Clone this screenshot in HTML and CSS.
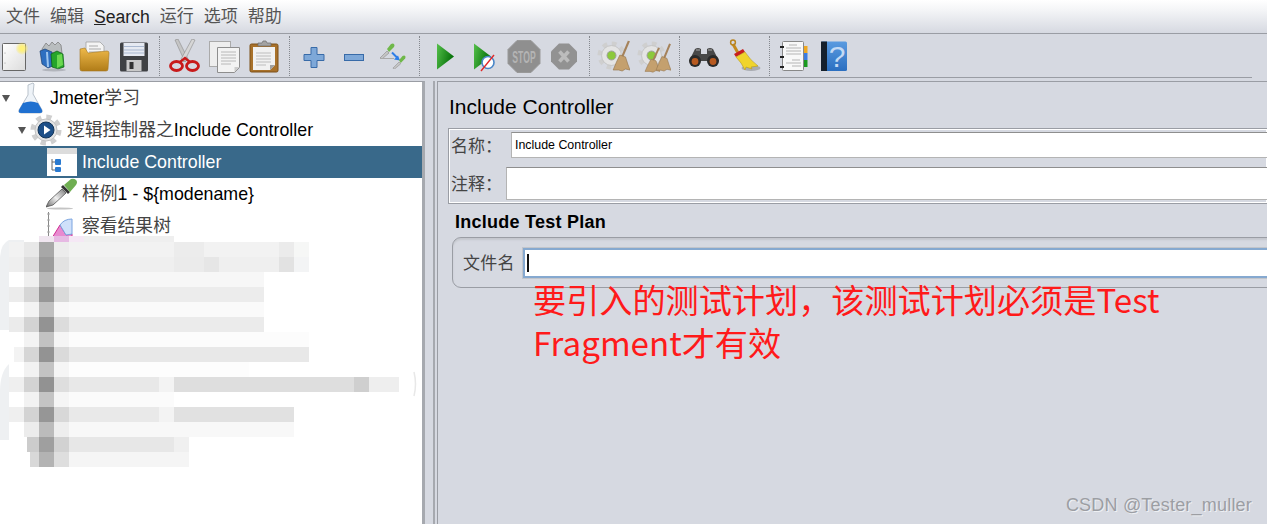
FILE: index.html
```html
<!DOCTYPE html>
<html lang="zh-CN">

<head>
    <meta charset="UTF-8">
    <title>Apache JMeter - Include Controller</title>
    <link rel="stylesheet" href="styles.css">
</head>

<body>
    <svg class="svg-defs" width="0" height="0">
        <defs>
            <linearGradient id="paper" x1="0" y1="0" x2="1" y2="1"><stop offset="0" stop-color="#fff"/><stop offset="1" stop-color="#dcdcdc"/></linearGradient>
            <linearGradient id="gold" x1="0" y1="0" x2="0" y2="1"><stop offset="0" stop-color="#eeb94a"/><stop offset="1" stop-color="#b07c18"/></linearGradient>
            <linearGradient id="green" x1="0" y1="0" x2="1" y2="0.4"><stop offset="0" stop-color="#55c04a"/><stop offset="1" stop-color="#046f08"/></linearGradient>
            <linearGradient id="blue" x1="0" y1="0" x2="0" y2="1"><stop offset="0" stop-color="#5a9be0"/><stop offset="1" stop-color="#2b6fc0"/></linearGradient>
            <linearGradient id="steel" x1="0" y1="1" x2="1" y2="0"><stop offset="0" stop-color="#6a6a6a"/><stop offset="0.5" stop-color="#f0f0f0"/><stop offset="1" stop-color="#777"/></linearGradient>
            <radialGradient id="glow"><stop offset="0.3" stop-color="#fff27a"/><stop offset="1" stop-color="#ffe94a" stop-opacity="0"/></radialGradient>
            <symbol id="gear" viewBox="0 0 32 32">
                <circle cx="16" cy="16" r="12.500" fill="none" stroke="#cfcfcf" stroke-width="6" stroke-dasharray="5 4.800"/>
                <circle cx="16" cy="16" r="11" fill="#e4e4e4" stroke="#c2c2c2"/>
            </symbol>
            <symbol id="twig" viewBox="0 0 16 32" preserveAspectRatio="none">
                <path d="M15 1L9 17" stroke="#a5825a" stroke-width="2"/>
                <path d="M7 15l5 2 2 7 2 6-4-1-3 2-3-1-5 0 3-8z" fill="#c4a06e" stroke="#94744c" stroke-width="0.6"/>
            </symbol>
            <symbol id="dropper" viewBox="0 0 16 16">
                <path d="M1 15l7-7 2 2-7 6z" fill="#c4c4c4" stroke="#8c8c8c" stroke-width="0.6"/>
                <path d="M8 6l4-5q2-1 3 0t0 3l-5 5z" fill="#6fb84a"/>
            </symbol>
        </defs>
    </svg>

    <nav class="menubar">
        <span class="menu-item">文件</span>
        <span class="menu-item">编辑</span>
        <span class="menu-item menu-latin"><u>S</u>earch</span>
        <span class="menu-item">运行</span>
        <span class="menu-item">选项</span>
        <span class="menu-item">帮助</span>
    </nav>

    <div class="toolbar">
        <!-- new -->
        <svg class="tool tool-first" viewBox="0 0 34 34">
            <rect x="5.500" y="4.500" width="23" height="27" rx="1" fill="url(#paper)" stroke="#666"/>
            <circle cx="8" cy="14" r="0.6" fill="#999"/><circle cx="8" cy="24" r="0.6" fill="#999"/>
            <circle cx="25" cy="9.500" r="6.500" fill="url(#glow)"/>
        </svg>
        <!-- templates -->
        <svg class="tool" viewBox="0 0 34 34">
            <path d="M5 10l4-6 3 3 3-4 3 3 3-3 3 3 1 8H6z" fill="#b9bdbf" stroke="#777" stroke-width="0.7"/>
            <path d="M3 12l5-2 7 3 1 14-5 2-6-4z" fill="#2e6fc0" stroke="#1c3f70" stroke-width="0.7"/>
            <path d="M9 13l2 0 1 15-2 0z" fill="#9fc6ee"/>
            <path d="M14 15l6-3 6 3 1 13-6 2-6-2z" fill="#25a52a" stroke="#0e5a12" stroke-width="0.7"/>
            <path d="M20 16l5-1 1 11-6 3z" fill="#6bd850"/>
            <ellipse cx="17" cy="31" rx="12" ry="1.400" fill="#9a9da3" opacity="0.6"/>
        </svg>
        <!-- open -->
        <svg class="tool" viewBox="0 0 34 34">
            <path d="M9 3h14l4 4v12H9z" fill="#f4f4f4" stroke="#999" stroke-width="0.7"/>
            <path d="M12 7h9M12 10h12M12 13h12" stroke="#aaa"/>
            <path d="M3 10l5-1 3 5 19-2q2 0 2 2l-1 16q0 2-2 2H5q-2 0-2-2z" fill="url(#gold)" stroke="#a5771f" stroke-width="0.6"/>
        </svg>
        <!-- save -->
        <svg class="tool" viewBox="0 0 34 34">
            <rect x="3" y="3.500" width="28" height="29" rx="1.500" fill="#3f4144"/>
            <rect x="6.500" y="4" width="21" height="13" fill="#e6eaf2"/>
            <path d="M7 7.500h20M7 11h20M7 14h20" stroke="#a9b8d0"/>
            <rect x="9.500" y="21" width="15" height="11" fill="#c9c9c9"/>
            <rect x="12.500" y="23" width="4" height="7" fill="#333"/>
        </svg>
        <span class="sep"></span>
        <!-- cut -->
        <svg class="tool" viewBox="0 0 34 34">
            <path d="M8 1l3-1 10 20-3 3z" fill="#c5c5c5" stroke="#8c8c8c" stroke-width="0.6"/>
            <path d="M28 1l-3-1-11 20 3 3z" fill="#d6d6d6" stroke="#8c8c8c" stroke-width="0.6"/>
            <ellipse cx="9.500" cy="27" rx="6" ry="4.500" fill="none" stroke="#c81a1a" stroke-width="2.800"/>
            <ellipse cx="25.500" cy="27" rx="6" ry="4.500" fill="none" stroke="#c81a1a" stroke-width="2.800"/>
            <path d="M13 23l5-4 5 4" fill="none" stroke="#c81a1a" stroke-width="2.400"/>
        </svg>
        <!-- copy -->
        <svg class="tool" viewBox="0 0 34 34">
            <rect x="2.500" y="2.500" width="21" height="25" fill="#eee" stroke="#aaa"/>
            <path d="M10.500 8.500h22v20l-5 5h-17z" fill="#f3f3f3" stroke="#8e8e8e"/>
            <path d="M27.500 33l0-5h5z" fill="#ccc"/>
            <path d="M14 13h15M14 16h15M14 19h15M14 22h15M14 25h10" stroke="#b8b8b8"/>
        </svg>
        <!-- paste -->
        <svg class="tool" viewBox="0 0 34 34">
            <rect x="3" y="5" width="28" height="28" rx="1.500" fill="#a8712a" stroke="#7c5018"/>
            <path d="M6 8h22v18l-5 5H6z" fill="#f1f1f1"/>
            <path d="M9 14h15M9 17h15M9 20h15M9 23h15M9 26h10" stroke="#bdbdbd"/>
            <path d="M23 31l0-5h5z" fill="#a0a0a0"/>
            <path d="M11 7V4h4l1-2h3l1 2h4v3z" fill="#a3a3a3" stroke="#6c6c6c" stroke-width="0.7"/>
        </svg>
        <span class="sep"></span>
        <!-- expand -->
        <svg class="tool" viewBox="0 0 34 34">
            <path d="M14 8.500h6v7h7v6h-7v7h-6v-7H7v-6h7z" fill="#7ea8d8" stroke="#386ba8"/>
        </svg>
        <!-- collapse -->
        <svg class="tool" viewBox="0 0 34 34">
            <rect x="7.500" y="15.500" width="19" height="6" fill="#7ea8d8" stroke="#386ba8"/>
        </svg>
        <!-- toggle -->
        <svg class="tool" viewBox="0 0 34 34">
            <use href="#dropper" x="2" y="4" width="16" height="16"/>
            <path d="M3 19.500h14" stroke="#a9a9a9"/>
            <path d="M15 13.500l5 5" stroke="#2c7de8" stroke-width="2"/>
            <path d="M23 21.500l-6-1 4-4z" fill="#2c7de8"/>
            <use href="#dropper" x="15" y="16" width="14" height="14"/>
        </svg>
        <span class="sep"></span>
        <!-- start -->
        <svg class="tool" viewBox="0 0 34 34">
            <path d="M10 4.500l17 13-17 13z" fill="url(#green)"/>
        </svg>
        <!-- start no pauses -->
        <svg class="tool" viewBox="0 0 34 34">
            <path d="M7 4.500l17 13-17 13z" fill="url(#green)"/>
            <circle cx="21" cy="23.500" r="6" fill="#fff" stroke="#4a86c8" stroke-width="1.600"/>
            <path d="M14 32L27 16" stroke="#e02828" stroke-width="1.400"/>
        </svg>
        <!-- stop -->
        <svg class="tool" viewBox="0 0 34 34">
            <path d="M10 1.500h14l9 9v14l-9 9H10l-9-9v-14z" fill="#8f8f8f" stroke="#999"/>
            <text class="stop-text" text-anchor="middle" transform="translate(17 23.500) scale(0.75 1.450)">STOP</text>
        </svg>
        <!-- shutdown -->
        <svg class="tool" viewBox="0 0 34 34">
            <path d="M12 4.500h10l8 8v10l-8 8H12l-8-8v-10z" fill="#929292"/>
            <path d="M12.500 12.500l9 10M21.500 12.500l-9 10" stroke="#bcbcbc" stroke-width="3.600"/>
        </svg>
        <span class="sep"></span>
        <!-- clear -->
        <svg class="tool" viewBox="0 0 34 34">
            <use href="#gear" x="0" y="2" width="29" height="29"/>
            <circle cx="14.500" cy="16.500" r="4.500" fill="#8cc83c" stroke="#a0a0a0"/>
            <use href="#twig" x="15" y="1" width="18" height="32"/>
        </svg>
        <!-- clear all -->
        <svg class="tool" viewBox="0 0 34 34">
            <use href="#gear" x="0" y="2" width="29" height="29"/>
            <circle cx="14.500" cy="16.500" r="4.500" fill="#8cc83c" stroke="#a0a0a0"/>
            <use href="#twig" x="7" y="8" width="16" height="26"/>
            <use href="#twig" x="18" y="4" width="16" height="29"/>
        </svg>
        <span class="sep"></span>
        <!-- search -->
        <svg class="tool" viewBox="0 0 34 34">
            <path d="M8 10q3-2 6 0v5h6v-5q3-2 6 0l6 12H2z" fill="#484848"/>
            <path d="M9 11h4M21 11h4" stroke="#aaa"/>
            <circle cx="8" cy="22" r="6" fill="#2a2a2a"/><circle cx="26" cy="22" r="6" fill="#2a2a2a"/>
            <circle cx="8" cy="22.500" r="3.400" fill="#b85a20"/><circle cx="26" cy="22.500" r="3.400" fill="#b85a20"/>
        </svg>
        <!-- clear search -->
        <svg class="tool" viewBox="0 0 34 34">
            <ellipse cx="24" cy="29" rx="9.500" ry="3" fill="#a9acb2"/>
            <path d="M6 5l5 9" stroke="#c48a1e" stroke-width="3"/>
            <circle cx="6" cy="3.500" r="2.400" fill="none" stroke="#b88420" stroke-width="1.500"/>
            <path d="M7 15l9-5 2 3-9 5z" fill="#c81e1e"/>
            <path d="M9 18l9-5q5 8 13 14l-7 1 1 2-6-2-1 3-4-7z" fill="#f0d42c" stroke="#b89c18" stroke-width="0.6"/>
        </svg>
        <span class="sep"></span>
        <!-- log viewer -->
        <svg class="tool" viewBox="0 0 34 34">
            <rect x="26" y="7" width="4.500" height="7" fill="#f0a820"/>
            <rect x="26" y="14" width="4.500" height="7" fill="#3c7ce0"/>
            <rect x="26" y="21" width="4.500" height="7" fill="#1a9a20"/>
            <rect x="5.500" y="2.500" width="21" height="29" rx="1" fill="#f8f8f8" stroke="#888"/>
            <path d="M12 6h8M9 9h15M9 12h15M9 15h15M15 21h8M9 24h15M15 27h9" stroke="#999" stroke-width="0.7"/>
            <path d="M3 8h4M3 18h4M3 28h4" stroke="#222" stroke-width="2"/>
        </svg>
        <!-- help -->
        <svg class="tool" viewBox="0 0 34 34">
            <rect x="4" y="2.500" width="26" height="29.500" rx="1.500" fill="url(#blue)"/>
            <rect x="4" y="2.500" width="6" height="29.500" fill="#15202c"/>
            <text class="help-text" x="20" y="28" text-anchor="middle">?</text>
        </svg>
    </div>

    <div class="main">
        <div class="tree-pane">
            <div class="tree-row level-0">
                <span class="arrow"></span>
                <svg class="tree-icon" viewBox="0 0 32 32">
                    <path d="M16 1l1 1-1 10 9 16q1 3-2 3H4q-3 0-2-3l9-15 0-10z" fill="#eef3f8" stroke="#a9b4bf" stroke-width="0.8"/>
                    <path d="M6 21q8-3 15 0l4 7q1 3-2 3H4q-3 0-2-3z" fill="#1f70d0"/>
                </svg>
                <span class="tree-label">Jmeter<span class="cjk">学习</span></span>
            </div>
            <div class="tree-row level-1">
                <span class="arrow"></span>
                <svg class="tree-icon" viewBox="0 0 32 32">
                    <use href="#gear" x="0" y="0" width="32" height="32"/>
                    <circle cx="16" cy="16" r="8" fill="#1d4f88" stroke="#123458"/>
                    <path d="M14 11.500l6.500 4.500-6.500 4.500z" fill="#fff"/>
                </svg>
                <span class="tree-label"><span class="cjk">逻辑控制器之</span>Include Controller</span>
            </div>
            <div class="tree-row level-2 selected">
                <svg class="tree-icon" viewBox="0 0 32 32">
                    <rect x="1" y="2" width="30" height="28" fill="#fff"/>
                    <rect x="1" y="2" width="30" height="6" fill="#dcdcdc"/>
                    <path d="M6 13v11h3M6 16h3" fill="none" stroke="#666"/>
                    <rect x="9" y="13" width="6" height="6" rx="1" fill="#2a7ad0"/>
                    <rect x="9" y="21" width="6" height="5" rx="1" fill="#2a7ad0"/>
                </svg>
                <span class="tree-label">Include Controller</span>
            </div>
            <div class="tree-row level-2">
                <svg class="tree-icon" viewBox="0 0 32 32">
                    <ellipse cx="14" cy="30.500" rx="13" ry="1.100" fill="#c4c4c4"/>
                    <path d="M0 29l3-6 13-12 4 4-13 12z" fill="url(#steel)" stroke="#444" stroke-width="0.7"/>
                    <path d="M15 9l7 7 2-2-7-7z" fill="#333"/>
                    <path d="M18 7l7-6q3-1 5 1t0 5l-6 7z" fill="#6fae52"/>
                </svg>
                <span class="tree-label"><span class="cjk">样例</span>1 - ${modename}</span>
            </div>
            <div class="tree-row level-2">
                <svg class="tree-icon" viewBox="0 0 32 32">
                    <path d="M2.500 2v30" stroke="#888"/>
                    <path d="M1 4h3M1 10h3M1 16h3M1 22h3" stroke="#aaa"/>
                    <path d="M6 28l8-13 6 10 6-1v8H6z" fill="#e88ad0" stroke="#d02c90"/>
                    <path d="M14 15q4-6 12-6v15l-6 1z" fill="#cfe0fa" stroke="#7aa4e0"/>
                </svg>
                <span class="tree-label cjk">察看结果树</span>
            </div>

            <!-- pixelated part of the screenshot -->
            <svg class="mosaic" width="422" height="240" viewBox="0 236 422 240" shape-rendering="crispEdges">
                <path d="M9 240Q0 244 0 260V330H24V240z" fill="#eef0f2" shape-rendering="auto"/>
                <path d="M9 364Q0 372 0 392V440H9V364z" fill="#eef0f2" shape-rendering="auto"/>
                <path d="M414 372Q417 384 414 396" fill="none" stroke="#e8e8e8" stroke-width="1.500" shape-rendering="auto"/>
                <rect x="39" y="236" width="15" height="6" fill="#f0e6f0"/>
                <rect x="54" y="236" width="15" height="6" fill="#e6b9e3"/>
                <rect x="69" y="236" width="15" height="6" fill="#f5e8f5"/>
                <rect x="84" y="236" width="90" height="6" fill="#efefef"/>
                <g fill="#f2f2f2">
                    <rect x="9" y="242" width="300" height="15"/>
                    <rect x="174" y="242" width="30" height="15" fill="#ececec"/>
                    <rect x="279" y="242" width="15" height="15" fill="#ebebeb"/>
                    <rect x="294" y="242" width="15" height="15" fill="#f6f7f6"/>
                    <rect x="9" y="257" width="300" height="15" fill="#efefef"/>
                    <rect x="174" y="257" width="30" height="15" fill="#ebebeb"/>
                    <rect x="204" y="257" width="15" height="15" fill="#e6e6e6"/>
                    <rect x="279" y="257" width="15" height="15" fill="#e2e2e2"/>
                    <rect x="294" y="257" width="15" height="15" fill="#f3f4f5"/>
                    <rect x="9" y="272" width="255" height="15" fill="#f7f7f7"/>
                    <rect x="9" y="287" width="255" height="15" fill="#ececec"/>
                    <rect x="9" y="302" width="255" height="15" fill="#fafafa"/>
                    <rect x="9" y="317" width="255" height="15" fill="#ebebeb"/>
                    <rect x="24" y="332" width="285" height="15" fill="#fcfcfc"/>
                    <rect x="24" y="347" width="285" height="15" fill="#e8e8e8"/>
                    <rect x="24" y="362" width="225" height="15" fill="#fdfdfd"/>
                    <rect x="9" y="377" width="150" height="15" fill="#e8e8e8"/>
                    <rect x="159" y="377" width="15" height="15" fill="#f3f3f3"/>
                    <rect x="174" y="377" width="180" height="15" fill="#dedede"/>
                    <rect x="354" y="377" width="15" height="15" fill="#cfcfcf"/>
                    <rect x="369" y="377" width="30" height="15" fill="#eeeeee"/>
                    <rect x="9" y="392" width="165" height="15" fill="#fbfbfb"/>
                    <rect x="9" y="407" width="150" height="15" fill="#e9e9e9"/>
                    <rect x="159" y="407" width="15" height="15" fill="#f3f3f3"/>
                    <rect x="174" y="407" width="120" height="15" fill="#e1e1e1"/>
                    <rect x="9" y="422" width="285" height="15" fill="#f8f8f8"/>
                    <rect x="27" y="437" width="162" height="15" fill="#e7e7e7"/>
                    <rect x="174" y="437" width="15" height="15" fill="#f0f0f0"/>
                    <rect x="30" y="452" width="159" height="15" fill="#f5f5f5"/>
                </g>
                <g>
                    <rect x="24" y="242" width="15" height="15" fill="#e8e8e8"/><rect x="39" y="242" width="15" height="15" fill="#a8a8a8"/><rect x="54" y="242" width="15" height="15" fill="#ececec"/>
                    <rect x="24" y="257" width="15" height="15" fill="#dcdcdc"/><rect x="39" y="257" width="15" height="15" fill="#9c9c9c"/><rect x="54" y="257" width="15" height="15" fill="#e2e2e2"/>
                    <rect x="9" y="272" width="15" height="15" fill="#ffffff"/><rect x="24" y="272" width="15" height="15" fill="#f0f0f0"/><rect x="39" y="272" width="15" height="15" fill="#b8b8b8"/><rect x="54" y="272" width="15" height="15" fill="#f3f3f3"/>
                    <rect x="24" y="287" width="15" height="15" fill="#d6d6d6"/><rect x="39" y="287" width="15" height="15" fill="#979797"/><rect x="54" y="287" width="15" height="15" fill="#dadada"/>
                    <rect x="9" y="302" width="15" height="15" fill="#ffffff"/><rect x="24" y="302" width="15" height="15" fill="#f3f3f3"/><rect x="39" y="302" width="15" height="15" fill="#c0c0c0"/><rect x="54" y="302" width="15" height="15" fill="#f7f7f7"/>
                    <rect x="24" y="317" width="15" height="15" fill="#d3d3d3"/><rect x="39" y="317" width="15" height="15" fill="#939393"/><rect x="54" y="317" width="15" height="15" fill="#dcdcdc"/>
                    <rect x="24" y="332" width="15" height="15" fill="#f3f3f3"/><rect x="39" y="332" width="15" height="15" fill="#c2c2c2"/><rect x="54" y="332" width="15" height="15" fill="#f5f5f5"/>
                    <rect x="14" y="347" width="10" height="15" fill="#f3f3f3"/><rect x="24" y="347" width="15" height="15" fill="#d6d6d6"/><rect x="39" y="347" width="15" height="15" fill="#939393"/><rect x="54" y="347" width="15" height="15" fill="#dadada"/>
                    <rect x="24" y="362" width="15" height="15" fill="#f2f2f2"/><rect x="39" y="362" width="15" height="15" fill="#c3c3c3"/><rect x="54" y="362" width="15" height="15" fill="#f5f5f5"/>
                    <rect x="9" y="377" width="15" height="15" fill="#efefef"/><rect x="24" y="377" width="15" height="15" fill="#d3d3d3"/><rect x="39" y="377" width="15" height="15" fill="#929292"/><rect x="54" y="377" width="15" height="15" fill="#dedede"/>
                    <rect x="9" y="392" width="15" height="15" fill="#ffffff"/><rect x="24" y="392" width="15" height="15" fill="#f2f2f2"/><rect x="39" y="392" width="15" height="15" fill="#c4c4c4"/><rect x="54" y="392" width="15" height="15" fill="#f5f5f5"/>
                    <rect x="9" y="407" width="15" height="15" fill="#efefef"/><rect x="24" y="407" width="15" height="15" fill="#d3d3d3"/><rect x="39" y="407" width="15" height="15" fill="#969696"/><rect x="54" y="407" width="15" height="15" fill="#d8d8d8"/>
                    <rect x="9" y="422" width="15" height="15" fill="#ffffff"/><rect x="24" y="422" width="15" height="15" fill="#ececec"/><rect x="39" y="422" width="15" height="15" fill="#bbbbbb"/><rect x="54" y="422" width="15" height="15" fill="#eeeeee"/>
                    <rect x="27" y="437" width="12" height="15" fill="#cccccc"/><rect x="39" y="437" width="15" height="15" fill="#9f9f9f"/><rect x="54" y="437" width="15" height="15" fill="#d2d2d2"/>
                    <rect x="30" y="452" width="9" height="15" fill="#d8d8d8"/><rect x="39" y="452" width="15" height="15" fill="#b3b3b3"/><rect x="54" y="452" width="15" height="15" fill="#dedede"/>
                </g>
            </svg>
        </div>

        <div class="splitter"></div>

        <div class="editor">
            <h1 class="editor-title">Include Controller</h1>

            <div class="name-box">
                <div class="field-row">
                    <label class="field-label label-name">名称：</label>
                    <div class="text-field name-field">Include Controller</div>
                </div>
                <div class="field-row">
                    <label class="field-label label-comment">注释：</label>
                    <div class="text-field comment-field"></div>
                </div>
            </div>

            <h2 class="section-title">Include Test Plan</h2>
            <div class="section-box">
                <label class="field-label label-file">文件名</label>
                <div class="text-field file-field"><span class="caret"></span></div>
            </div>

            <p class="annotation">要引入的测试计划，该测试计划必须是Test Fragment才有效</p>
        </div>
    </div>

    <div class="watermark">CSDN @Tester_muller</div>
</body>

</html>
```

FILE: styles.css
```css
html,
body {
    height: 100%;
}

body {
    margin: 0;
    width: 1267px;
    height: 524px;
    overflow: hidden;
    position: relative;
    background-color: #d6d9e1;
    color: #000;
    font-family: "Liberation Sans", "Noto Sans CJK SC", sans-serif;
}

.svg-defs {
    display: block;
    height: 0;
}

.menubar {
    display: flex;
    align-items: center;
    gap: 10px;
    height: 33px;
    padding-left: 6px;
    background: linear-gradient(#ffffff, #f4f5f7 30%, #d6d9e1);
    border-bottom: 1px solid #9a9da4;
}

.menu-item {
    font-size: 17px;
    line-height: 20px;
    color: #555;
}

.menu-latin {
    font-size: 17.6px;
    color: #222;
}

.toolbar {
    display: flex;
    align-items: center;
    width: 1252px;
    height: 43px;
    margin-bottom: 3px;
    border-bottom: 1px solid #9a9da4;
}

.tool {
    flex: none;
    width: 34px;
    height: 34px;
    margin: 0 3px;
}

.tool-first {
    margin-left: -3px;
}

.sep {
    flex: none;
    width: 5px;
    height: 40px;
    margin-right: 4px;
    border-right: 1px dotted #85888e;
}

.stop-text {
    font-size: 11.5px;
    font-weight: bold;
    fill: #b4b4b4;
}

.help-text {
    font-size: 30px;
    fill: #c4daf4;
}

.main {
    display: flex;
    height: 443px;
}

.tree-pane {
    position: relative;
    flex: none;
    width: 422px;
    background-color: #fff;
    border-top: 1px solid #9a9da4;
    border-right: 3px solid #a6a9af;
    overflow: hidden;
}

.tree-row {
    display: flex;
    align-items: center;
    height: 32px;
    font-size: 17.8px;
    line-height: 20px;
}

.tree-row.selected {
    background-color: #39698a;
    color: #fff;
}

.arrow {
    flex: none;
    width: 0;
    height: 0;
    border-left: 4px solid transparent;
    border-right: 4px solid transparent;
    border-top: 7px solid #555;
}

.tree-icon {
    flex: none;
    width: 32px;
    height: 32px;
}

.level-0 {
    padding-left: 2px;
}

.level-0 .arrow {
    margin-right: 7px;
}

.level-0 .tree-icon {
    margin-right: 1px;
}

.level-1 {
    padding-left: 18px;
}

.level-1 .arrow {
    margin-right: 4px;
}

.level-1 .tree-icon {
    margin-right: 5px;
}

.level-2 {
    padding-left: 46px;
}

.level-2 .tree-icon {
    margin-right: 4px;
}

.cjk {
    color: #444;
}

.mosaic {
    position: absolute;
    left: 0;
    top: 154px;
}

.splitter {
    flex: none;
    width: 8px;
    margin-right: 2px;
    border-right: 2px solid #a6a9af;
}

.editor {
    position: relative;
    flex: 1;
    min-width: 0;
    padding-left: 10px;
    border-top: 1px solid #9a9da4;
    border-left: 1px solid #9a9da4;
}

.editor-title {
    margin: 13px 0 9px 1px;
    font-size: 21px;
    font-weight: normal;
    line-height: 24px;
}

.name-box {
    padding: 3px 0 3px 2px;
    border: 1px solid #9a9da4;
    border-right: none;
    box-shadow: inset 0 0 0 1px #fff;
}

.field-row {
    display: flex;
    align-items: center;
}

.field-row + .field-row {
    margin-top: 9px;
}

.field-label {
    flex: none;
    padding-top: 3px;
    font-size: 17px;
    line-height: 20px;
    color: #444;
}

.label-name {
    width: 60px;
}

.label-comment {
    width: 55px;
}

.text-field {
    flex: 1;
    box-sizing: border-box;
    background-color: #fff;
    border: 1px solid #b4b4b4;
    border-right: none;
    border-top-color: #8e8e8e;
}

.name-field {
    height: 26px;
    padding-left: 3px;
    font-size: 12.4px;
    line-height: 24px;
}

.comment-field {
    height: 33px;
}

.section-title {
    margin: 7px 0 4px 7px;
    font-size: 18px;
    font-weight: bold;
    line-height: 22px;
    letter-spacing: 0.25px;
}

.section-box {
    display: flex;
    align-items: center;
    gap: 8px;
    height: 51px;
    margin-left: 4px;
    margin-right: -20px;
    padding-left: 10px;
    box-sizing: border-box;
    border: 1px solid #9a9da4;
    border-radius: 9px;
    box-shadow: inset 0 2px 2px #c4c7cd;
}

.label-file {
    letter-spacing: 0.3px;
}

.file-field {
    display: flex;
    align-items: center;
    height: 30px;
    padding-left: 2px;
    border: 2px solid #86a9d0;
    box-shadow: 0 0 0 1px #c2c5cb;
}

.caret {
    width: 2px;
    height: 18px;
    background-color: #111;
}

.annotation {
    position: absolute;
    left: 95px;
    top: 196px;
    width: 640px;
    margin: 0;
    font-family: "Noto Sans CJK SC", sans-serif;
    font-size: 33.15px;
    line-height: 43px;
    color: #ff1a1a;
}

.watermark {
    position: absolute;
    right: 15px;
    bottom: 8px;
    font-size: 18px;
    letter-spacing: 0.2px;
    color: #9c9ea3;
    text-shadow: 1px 1px 0 #eef0f3;
}
```
